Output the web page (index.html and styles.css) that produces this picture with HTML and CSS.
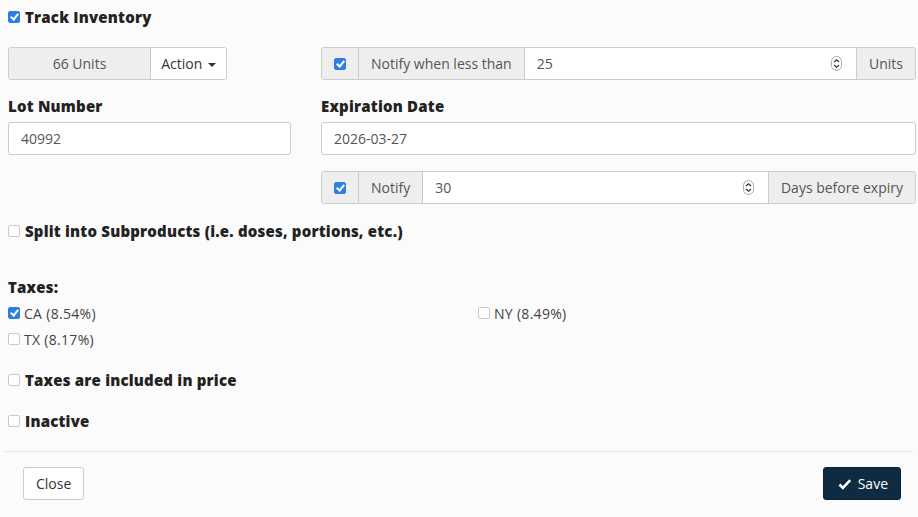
FILE: index.html
```html
<!DOCTYPE html>
<html>
	<head>
		<meta charset="UTF-8">
		<title>Product Inventory</title>
		<link rel="stylesheet" href="styles.css">
	</head>
	<body>
		<div class="form">
			<label class="check-title track"><input type="checkbox" class="cb" checked> Track Inventory</label>

			<div class="grid row-units">
				<div class="group group-left">
					<span class="addon units">66 Units</span>
					<button class="btn-action">Action <span class="caret"></span></button>
				</div>
				<div class="group">
					<span class="addon addon-cb"><input type="checkbox" class="cb" checked></span>
					<span class="addon">Notify when less than</span>
					<div class="field">
						<span class="val">25</span>
						<svg class="spin" width="11" height="15" viewBox="0 0 11 15"><rect x="0.5" y="0.5" width="10" height="14" rx="5" fill="none" stroke="#aaa"/><path d="M3 6 L5.5 3.8 L8 6 M3 9 L5.5 11.2 L8 9" fill="none" stroke="#333" stroke-width="1.2"/></svg>
					</div>
					<span class="addon">Units</span>
				</div>
			</div>

			<div class="grid row-fields">
				<div>
					<label class="lbl">Lot Number</label>
					<div class="input">40992</div>
				</div>
				<div>
					<label class="lbl">Expiration Date</label>
					<div class="input">2026-03-27</div>
					<div class="group row-expiry">
						<span class="addon addon-cb"><input type="checkbox" class="cb" checked></span>
						<span class="addon">Notify</span>
						<div class="field">
							<span class="val">30</span>
							<svg class="spin" width="11" height="15" viewBox="0 0 11 15"><rect x="0.5" y="0.5" width="10" height="14" rx="5" fill="none" stroke="#aaa"/><path d="M3 6 L5.5 3.8 L8 6 M3 9 L5.5 11.2 L8 9" fill="none" stroke="#333" stroke-width="1.2"/></svg>
						</div>
						<span class="addon">Days before expiry</span>
					</div>
				</div>
			</div>

			<label class="check-title split"><input type="checkbox" class="cb"> Split into Subproducts (i.e. doses, portions, etc.)</label>

			<div class="check-title taxes-title">Taxes:</div>
			<div class="taxes">
				<label class="tax"><input type="checkbox" class="cb" checked> CA (8.54%)</label>
				<label class="tax"><input type="checkbox" class="cb"> NY (8.49%)</label>
				<label class="tax"><input type="checkbox" class="cb"> TX (8.17%)</label>
			</div>

			<label class="check-title included"><input type="checkbox" class="cb"> Taxes are included in price</label>
			<label class="check-title inactive"><input type="checkbox" class="cb"> Inactive</label>
		</div>

		<div class="footer">
			<button class="btn btn-close">Close</button>
			<button class="btn btn-save"><svg width="14" height="12" viewBox="0 0 14 12"><path d="M1.5 6.5 L5 10 L12.5 2" fill="none" stroke="#fff" stroke-width="2.6"/></svg> Save</button>
		</div>
	</body>
</html>
```

FILE: styles.css
```css
body, html { margin: 0; padding: 0; background: #fbfbfb; }
body { font-family: "Open Sans", sans-serif; font-size: 14px; color: #333; }
.form { padding: 0 2px 0 8px; }

/* checkboxes */
.cb {
	appearance: none;
	-webkit-appearance: none;
	position: relative;
	width: 12px;
	height: 12px;
	margin: 0;
	border: 1px solid #c9c9c9;
	border-radius: 2px;
	background: #fff;
	flex: none;
}
.cb:checked { background: #2f7fe3; border-color: #2f7fe3; }
.cb:checked:after {
	content: "";
	position: absolute;
	left: 3px;
	top: 0px;
	width: 3px;
	height: 6px;
	border: solid #fff;
	border-width: 0 2px 2px 0;
	transform: rotate(40deg);
}

.check-title {
	display: flex;
	align-items: center;
	gap: 5px;
	height: 18px;
	font-weight: 800;
	font-size: 15px;
	letter-spacing: 0.2px;
	color: #222;
}
.track { margin-top: 8px; }

.grid { display: grid; grid-template-columns: 283px 1fr; column-gap: 30px; }
.row-units { margin-top: 21px; }
.row-fields { margin-top: 16px; }

/* input groups */
.group { display: flex; height: 33px; box-sizing: border-box; border: 1px solid #ccc; border-radius: 3px; overflow: hidden; }
.group-left { width: 219px; }
.addon { display: flex; align-items: center; justify-content: center; padding: 0 12px; background: #eee; color: #555; border-left: 1px solid #ccc; white-space: nowrap; }
.addon:first-child { border-left: none; }
.addon-cb { width: 12px; }
.units { width: 117px; }
.btn-action { flex: 1; border: none; border-left: 1px solid #ccc; background: #fff; font: inherit; color: #333; padding: 0; }
.caret { display: inline-block; width: 0; height: 0; margin-left: 2px; vertical-align: middle; border-top: 4px solid #333; border-left: 4px solid transparent; border-right: 4px solid transparent; }
.field { flex: 1; display: flex; align-items: center; justify-content: space-between; padding: 0 14px 0 12px; background: #fff; color: #555; border-left: 1px solid #ccc; }
.spin { display: block; }

.lbl { display: block; line-height: 20px; margin-bottom: 6px; font-weight: 800; font-size: 15px; letter-spacing: 0.2px; color: #222; }
.input { height: 33px; box-sizing: border-box; border: 1px solid #ccc; border-radius: 3px; background: #fff; padding: 0 12px; line-height: 31px; color: #555; }
.row-expiry { margin-top: 16px; }

.split { margin-top: 18px; }
.taxes-title { margin-top: 38px; }
.taxes { display: grid; grid-template-columns: 470px 1fr; row-gap: 8px; margin-top: 8px; }
.tax { display: flex; align-items: center; gap: 4px; height: 18px; color: #444; letter-spacing: 0.3px; }
.included { margin-top: 23px; }
.inactive { margin-top: 23px; }

.footer { display: flex; justify-content: space-between; margin: 21px 5px 0; padding: 15px 12px 0 18px; border-top: 1px solid #e3e3e3; }
.btn { height: 33px; box-sizing: border-box; border-radius: 3px; font: inherit; padding: 0 12px; }
.btn-close { width: 61px; background: #fff; border: 1px solid #ccc; color: #333; }
.btn-save { display: flex; align-items: center; gap: 6px; width: 78px; padding: 0 12px 0 14px; background: #0d2b43; border: 1px solid #0a2236; color: #fff; }
```
